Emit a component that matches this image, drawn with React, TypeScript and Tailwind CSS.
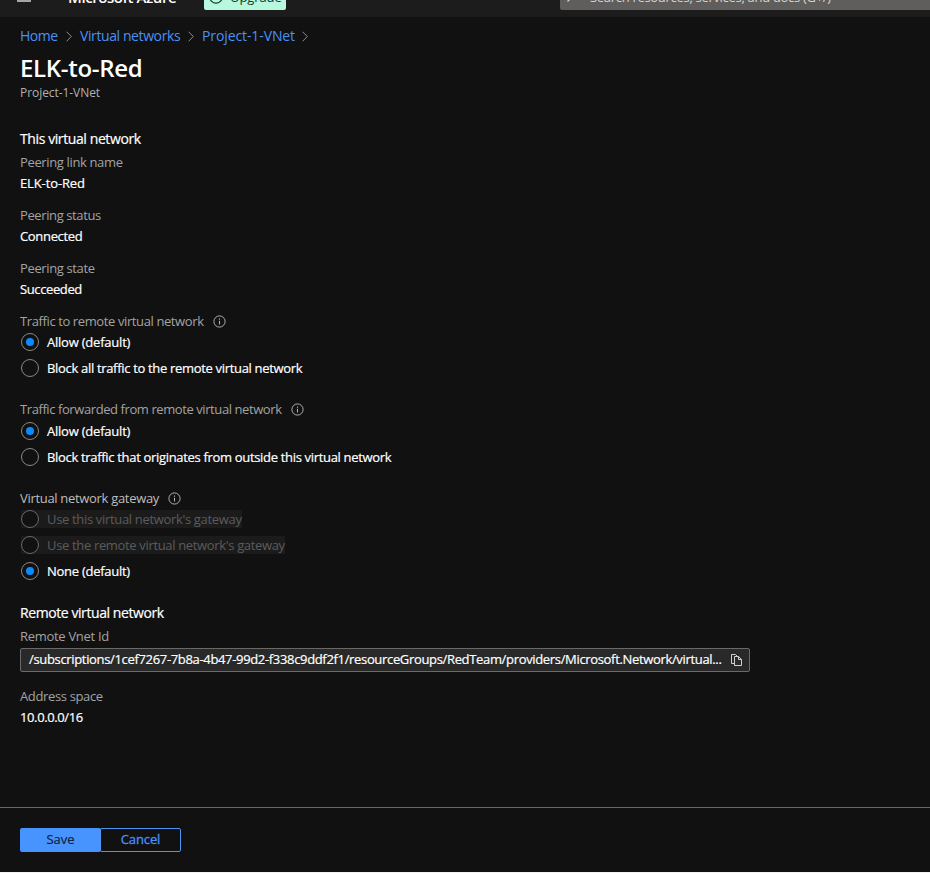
import React from 'react';

function InfoIcon() {
  return (
    <svg className="mt-px size-[13px] shrink-0 text-[#b0b0b0]" viewBox="0 0 13 13" fill="none" stroke="currentColor">
      <circle cx="6.5" cy="6.5" r="5.6" strokeWidth="1" />
      <path d="M6.5 5.8v3.6M6.5 3.6v1.2" strokeWidth="1.1" />
    </svg>
  );
}

function Chevron({ className = '' }: { className?: string }) {
  return (
    <svg className={`h-[11px] w-[6px] shrink-0 text-[#8f8f8f] ${className}`} viewBox="0 0 6 11" fill="none" stroke="currentColor">
      <path d="M.5.7 5.3 5.5.5 10.3" strokeWidth="1" />
    </svg>
  );
}

function CopyIcon() {
  return (
    <svg className="h-[13px] w-[12px] shrink-0 text-[#d0d0d0]" viewBox="0 0 12 13" fill="none" stroke="currentColor" strokeWidth="1">
      <path d="M3.5 9.5h-3v-9h4L6 2" />
      <path d="M3.5 2.5h4l3 3v6h-7z" />
      <path d="M7.5 2.5v3h3" />
    </svg>
  );
}

function Label({ text, className = '', info = false }: { text: string; className?: string; info?: boolean }) {
  return (
    <div className={`flex h-5 items-center gap-[9px] ${className}`}>
      <span>{text}</span>
      {info && <InfoIcon />}
    </div>
  );
}

function Value({ text, className = '' }: { text: string; className?: string }) {
  return (
    <div className={`mt-px flex h-5 items-center text-white [-webkit-text-stroke:0.2px_currentColor] ${className}`}>
      <span>{text}</span>
    </div>
  );
}

function Radio({ text, checked = false, disabled = false, className = '' }: { text: string; checked?: boolean; disabled?: boolean; className?: string }) {
  return (
    <div
      className={`ml-px flex h-[18px] w-fit items-center gap-2 ${
        disabled ? 'bg-[#1b1b1b] text-[#5c5c5c]' : 'text-white [-webkit-text-stroke:0.2px_currentColor]'
      } ${className}`}
    >
      <span className={`flex size-[18px] shrink-0 items-center justify-center rounded-full border bg-[#111] ${disabled ? 'border-[#6a6a6a]' : 'border-[#8a8886]'}`}>
        {checked && <span className="size-2 rounded-full bg-[#0a8bff]" />}
      </span>
      <span>{text}</span>
    </div>
  );
}

export default function App() {
  return (
    <div className="flex h-[873px] w-[930px] flex-col overflow-hidden border-b border-[#f3f3f3] bg-[#111] font-['Open_Sans','Noto_Sans',sans-serif] text-[13px] leading-5 whitespace-nowrap text-[#a3a3a3]">
      <header className="h-[17px] shrink-0 overflow-hidden bg-[#1c1c1c]">
        <div className="-mt-[23px] flex h-10 items-center">
          <div className="-mt-1 ml-[17px] flex w-[14px] flex-col gap-1">
            <span className="h-0.5 bg-[#a6a6a6]" />
            <span className="h-0.5 bg-[#a6a6a6]" />
            <span className="h-0.5 bg-[#a6a6a6]" />
          </div>
          <span className="ml-[37px] w-[108px] text-[15px] font-semibold tracking-[-0.42px] text-white">Microsoft Azure</span>
          <div className="ml-7 flex h-[26px] w-[82px] items-center rounded-[2px] bg-[#b8f8de] pl-[5px] text-[#123a2c]">
            <svg className="size-[14px]" viewBox="0 0 14 14" fill="none" stroke="currentColor" strokeWidth="1.2">
              <circle cx="7" cy="7" r="6.2" />
              <path d="M7 10V4M4.5 6.5 7 4l2.5 2.5" />
            </svg>
            <span className="ml-[7px] tracking-[-0.1px]">Upgrade</span>
          </div>
          <div className="ml-[274px] flex h-[26px] flex-1 items-center rounded-l-[2px] bg-[#605e5c] text-[#d6d4d2]">
            <svg className="-mt-1 ml-[7px] size-[13px]" viewBox="0 0 13 13" fill="none" stroke="currentColor" strokeWidth="1.2">
              <circle cx="8" cy="5" r="4" />
              <path d="m5.2 7.8-4.7 4.7" />
            </svg>
            <span className="ml-[10px] tracking-[-0.3px]">Search resources, services, and docs (G+/)</span>
          </div>
        </div>
      </header>

      <main className="flex flex-1 flex-col px-5">
        <nav className="mt-[9px] flex h-5 items-center text-[14px] text-[#4a90f5]">
          <a className="w-[46px] tracking-[-0.5px]">Home</a>
          <Chevron />
          <a className="ml-2 w-[108px] tracking-[-0.4px]">Virtual networks</a>
          <Chevron />
          <a className="ml-2 w-[100px] tracking-[-0.1px]">Project-1-VNet</a>
          <Chevron />
        </nav>
        <h1 className="mt-[7px] h-[30px] text-[24px] leading-[30px] font-semibold tracking-[-0.3px] text-white">ELK-to-Red</h1>
        <p className="h-5 text-[12px] tracking-[-0.06px] text-[#b0b0b0]">Project-1-VNet</p>

        <h2 className="mt-[26px] h-5 text-[14px] tracking-[-0.4px] text-white [-webkit-text-stroke:0.2px_currentColor]">This virtual network</h2>
        <Label text="Peering link name" className="mt-[3px] tracking-[-0.36px]" />
        <Value text="ELK-to-Red" className="tracking-[-0.12px]" />
        <Label text="Peering status" className="mt-3 tracking-[-0.39px]" />
        <Value text="Connected" className="tracking-[-0.33px]" />
        <Label text="Peering state" className="mt-3 tracking-[-0.37px]" />
        <Value text="Succeeded" className="tracking-[-0.38px]" />

        <Label text="Traffic to remote virtual network" info className="mt-3 tracking-[-0.39px]" />
        <Radio text="Allow (default)" checked className="mt-[2px] tracking-[-0.22px]" />
        <Radio text="Block all traffic to the remote virtual network" className="mt-2 tracking-[-0.32px]" />

        <Label text="Traffic forwarded from remote virtual network" info className="mt-[22px] tracking-[-0.415px]" />
        <Radio text="Allow (default)" checked className="mt-[3px] tracking-[-0.22px]" />
        <Radio text="Block traffic that originates from outside this virtual network" className="mt-2 tracking-[-0.32px]" />

        <Label text="Virtual network gateway" info className="mt-[22px] tracking-[-0.31px] text-[#bdbdbd]" />
        <Radio text="Use this virtual network's gateway" disabled className="mt-[2px] tracking-[-0.33px]" />
        <Radio text="Use the remote virtual network's gateway" disabled className="mt-2 tracking-[-0.34px]" />
        <Radio text="None (default)" checked className="mt-2 tracking-[-0.27px]" />

        <h2 className="mt-[23px] h-5 text-[14px] tracking-[-0.42px] text-white [-webkit-text-stroke:0.2px_currentColor]">Remote virtual network</h2>
        <Label text="Remote Vnet Id" className="mt-[3px] tracking-[-0.3px]" />
        <div className="mt-[2px] flex h-6 w-[730px] items-center rounded-[2px] border border-[#6b6967] bg-[#292929] pr-[6px] pl-2 text-white">
          <span className="flex-1 pb-0.5 tracking-[-0.335px] [-webkit-text-stroke:0.2px_currentColor]">
            /subscriptions/1cef7267-7b8a-4b47-99d2-f338c9ddf2f1/resourceGroups/RedTeam/providers/Microsoft.Network/virtual...
          </span>
          <CopyIcon />
        </div>
        <Label text="Address space" className="mt-[14px] tracking-[-0.36px]" />
        <Value text="10.0.0.0/16" className="tracking-[-0.38px]" />
      </main>

      <footer className="flex h-[65px] shrink-0 items-start border-t border-[#6b6967] px-5 pt-5">
        <button className="flex h-6 w-[81px] items-center justify-center rounded-[2px] bg-[#4894fe] pb-0.5 text-[#10203c] [-webkit-text-stroke:0.15px_currentColor]">Save</button>
        <button className="-ml-px flex h-6 w-[81px] items-center justify-center rounded-[2px] border border-[#4f94f0] pb-0.5 tracking-[-0.1px] text-[#4a90f5] [-webkit-text-stroke:0.3px_currentColor]">Cancel</button>
      </footer>
    </div>
  );
}
